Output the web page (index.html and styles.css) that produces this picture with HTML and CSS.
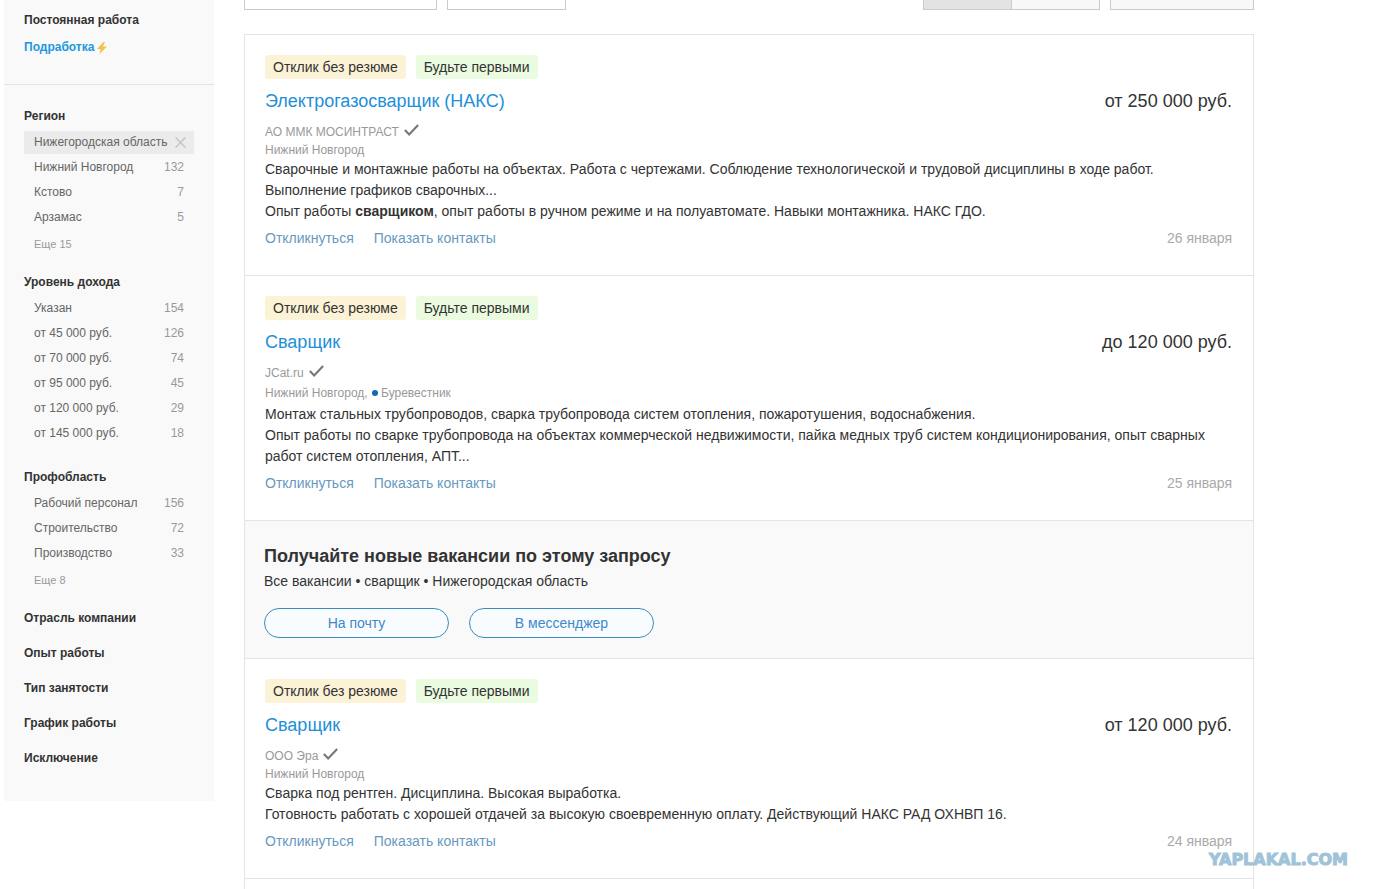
FILE: index.html
```html
<!DOCTYPE html>
<html lang="ru">

<head>
  <meta charset="UTF-8">
  <meta name="viewport" content="width=device-width, initial-scale=1.0">
  <title>Вакансии: сварщик</title>
  <link rel="stylesheet" href="styles.css">
</head>

<body>
  <div class="page">
    <aside class="sidebar">
      <nav class="work-type">
        <span class="work-type-current">Постоянная работа</span>
        <a href="#" class="work-type-link">Подработка
          <svg class="bolt" viewBox="0 0 10 12"><path d="M6.5 0 0 7h3.6L2.4 12 10 4.6H5.9L8 0z" fill="#f3c14b" /></svg>
        </a>
      </nav>
      <div class="filters">
        <section class="filter">
          <h3>Регион</h3>
          <ul>
            <li class="selected"><a href="#">Нижегородская область</a>
              <button class="remove" aria-label="Убрать">
                <svg viewBox="0 0 10 10"><path d="M0.5 0.5l9 9M9.5 0.5l-9 9" stroke="#c4c4c4" stroke-width="1.3" /></svg>
              </button>
            </li>
            <li><a href="#">Нижний Новгород</a><span>132</span></li>
            <li><a href="#">Кстово</a><span>7</span></li>
            <li><a href="#">Арзамас</a><span>5</span></li>
          </ul>
          <a href="#" class="more">Еще 15</a>
        </section>
        <section class="filter filter-full">
          <h3>Уровень дохода</h3>
          <ul>
            <li><a href="#">Указан</a><span>154</span></li>
            <li><a href="#">от 45 000 руб.</a><span>126</span></li>
            <li><a href="#">от 70 000 руб.</a><span>74</span></li>
            <li><a href="#">от 95 000 руб.</a><span>45</span></li>
            <li><a href="#">от 120 000 руб.</a><span>29</span></li>
            <li><a href="#">от 145 000 руб.</a><span>18</span></li>
          </ul>
        </section>
        <section class="filter">
          <h3>Профобласть</h3>
          <ul>
            <li><a href="#">Рабочий персонал</a><span>156</span></li>
            <li><a href="#">Строительство</a><span>72</span></li>
            <li><a href="#">Производство</a><span>33</span></li>
          </ul>
          <a href="#" class="more">Еще 8</a>
        </section>
        <div class="closed">
          <h3>Отрасль компании</h3>
          <h3>Опыт работы</h3>
          <h3>Тип занятости</h3>
          <h3>График работы</h3>
          <h3>Исключение</h3>
        </div>
      </div>
    </aside>

    <main class="content">
      <div class="toolbar">
        <button class="tool tool-sort"></button>
        <button class="tool tool-period"></button>
        <div class="switch">
          <button class="tool active"></button>
          <button class="tool"></button>
        </div>
        <button class="tool tool-map"></button>
      </div>

      <div class="list">
        <article class="card">
          <div class="tags">
            <span class="tag tag-yellow">Отклик без резюме</span>
            <span class="tag tag-green">Будьте первыми</span>
          </div>
          <div class="row title-row">
            <h2><a href="#">Электрогазосварщик (НАКС)</a></h2>
            <span class="salary">от 250 000 руб.</span>
          </div>
          <div class="company">АО ММК МОСИНТРАСТ
            <svg class="check" viewBox="0 0 14 11"><path d="M0.8 5.6l4 4L13.2 0.9" /></svg>
          </div>
          <div class="place">Нижний Новгород</div>
          <p>Сварочные и монтажные работы на объектах. Работа с чертежами. Соблюдение технологической и трудовой дисциплины в ходе работ. Выполнение графиков сварочных...</p>
          <p>Опыт работы <b>сварщиком</b>, опыт работы в ручном режиме и на полуавтомате. Навыки монтажника. НАКС ГДО.</p>
          <div class="row actions">
            <div class="links"><a href="#">Откликнуться</a><a href="#">Показать контакты</a></div>
            <span class="date">26 января</span>
          </div>
        </article>

        <article class="card">
          <div class="tags">
            <span class="tag tag-yellow">Отклик без резюме</span>
            <span class="tag tag-green">Будьте первыми</span>
          </div>
          <div class="row title-row">
            <h2><a href="#">Сварщик</a></h2>
            <span class="salary">до 120 000 руб.</span>
          </div>
          <div class="company">JCat.ru
            <svg class="check" viewBox="0 0 14 11"><path d="M0.8 5.6l4 4L13.2 0.9" /></svg>
          </div>
          <div class="place place-metro">Нижний Новгород, <i class="metro"></i>Буревестник</div>
          <p>Монтаж стальных трубопроводов, сварка трубопровода систем отопления, пожаротушения, водоснабжения.</p>
          <p>Опыт работы по сварке трубопровода на объектах коммерческой недвижимости, пайка медных труб систем кондиционирования, опыт сварных работ систем отопления, АПТ...</p>
          <div class="row actions">
            <div class="links"><a href="#">Откликнуться</a><a href="#">Показать контакты</a></div>
            <span class="date">25 января</span>
          </div>
        </article>

        <section class="subscribe">
          <h2>Получайте новые вакансии по этому запросу</h2>
          <p>Все вакансии • сварщик • Нижегородская область</p>
          <div class="subscribe-buttons">
            <button>На почту</button>
            <button>В мессенджер</button>
          </div>
        </section>

        <article class="card">
          <div class="tags">
            <span class="tag tag-yellow">Отклик без резюме</span>
            <span class="tag tag-green">Будьте первыми</span>
          </div>
          <div class="row title-row">
            <h2><a href="#">Сварщик</a></h2>
            <span class="salary">от 120 000 руб.</span>
          </div>
          <div class="company">ООО Эра
            <svg class="check" viewBox="0 0 14 11"><path d="M0.8 5.6l4 4L13.2 0.9" /></svg>
          </div>
          <div class="place">Нижний Новгород</div>
          <p>Сварка под рентген. Дисциплина. Высокая выработка.</p>
          <p>Готовность работать с хорошей отдачей за высокую своевременную оплату. Действующий НАКС РАД ОХНВП 16.</p>
          <div class="row actions">
            <div class="links"><a href="#">Откликнуться</a><a href="#">Показать контакты</a></div>
            <span class="date">24 января</span>
          </div>
        </article>
      </div>
    </main>
  </div>
  <div class="watermark">YAPLAKAL.COM</div>
</body>

</html>
```

FILE: styles.css
```css
* {
  margin: 0;
  padding: 0;
  box-sizing: border-box;
}

body {
  font-family: "Liberation Sans", Arial, sans-serif;
  font-size: 14px;
  line-height: 21px;
  color: #333;
  background-color: #fff;
}

a {
  color: inherit;
  text-decoration: none;
}

ul {
  list-style: none;
}

button {
  font-family: inherit;
  cursor: pointer;
}

.page {
  display: flex;
  align-items: flex-start;
  gap: 30px;
  min-height: 100vh;
  padding: 0 120px 0 4px;
}

/* sidebar */
.sidebar {
  flex: 0 0 210px;
  background-color: #f9f9f9;
  font-size: 12px;
}

.work-type {
  display: flex;
  flex-direction: column;
  padding: 7px 20px 23px;
  border-bottom: 1px solid #e4e4e4;
  font-weight: bold;
  line-height: 27px;
}

.work-type-link {
  display: flex;
  align-items: center;
  gap: 3px;
  color: #1b98e0;
}

.bolt {
  width: 10px;
  height: 12px;
}

.filters {
  padding: 19px 20px 31px;
}

.filters h3 {
  font-size: 12px;
  line-height: 24px;
}

.filter {
  margin-bottom: 14px;
}

.filter-full {
  margin-bottom: 20px;
}

.filter ul {
  display: flex;
  flex-direction: column;
  gap: 2px;
  margin-top: 3px;
}

.filter li {
  display: flex;
  justify-content: space-between;
  align-items: center;
  padding: 0 10px;
  line-height: 23px;
  color: #666;
  white-space: nowrap;
}

.filter li span {
  color: #999;
}

.filter .selected {
  padding-right: 8px;
  background-color: #ebebeb;
}

.remove {
  display: flex;
  border: none;
  background: none;
}

.remove svg {
  width: 11px;
  height: 11px;
}

.more {
  display: block;
  margin-top: 4px;
  padding: 0 10px;
  font-size: 11px;
  line-height: 23px;
  color: #999;
}

.closed {
  display: flex;
  flex-direction: column;
  gap: 11px;
}

/* results */
.content {
  flex: 1;
  min-width: 0;
  min-height: 100vh;
  display: flex;
  flex-direction: column;
}

.toolbar {
  display: flex;
  gap: 10px;
  margin-bottom: 24px;
}

.tool {
  height: 10px;
  border: 1px solid #c8cccf;
  border-top: none;
  background-color: #f8f8f8;
}

.tool-sort {
  width: 193px;
  background-color: #fff;
}

.tool-period {
  width: 119px;
  background-color: #fff;
}

.switch {
  display: flex;
  width: 177px;
  margin-left: auto;
}

.switch .tool {
  flex: 1;
  border-left: none;
}

.switch .active {
  border-left: 1px solid #c8cccf;
  background-color: #e3e3e3;
}

.tool-map {
  width: 144px;
}

.list {
  flex: 1;
  border: 1px solid #e4e4e4;
  border-bottom: none;
}

.card {
  padding: 20px 21px 27px 20px;
  border-bottom: 1px solid #e4e4e4;
}

.row {
  display: flex;
  justify-content: space-between;
}

.tags {
  display: flex;
  gap: 10px;
}

.tag {
  padding: 0 8px;
  border-radius: 3px;
  line-height: 24px;
}

.tag-yellow {
  background-color: #fcf2d6;
}

.tag-green {
  background-color: #eafbe0;
}

.title-row {
  margin: 10px 0;
  font-size: 18px;
  line-height: 24px;
}

.title-row h2 {
  font-size: 18px;
  font-weight: normal;
  color: #1e8fd8;
}

.company,
.place {
  font-size: 12px;
  line-height: 18px;
  color: #999;
}

.company {
  display: flex;
  gap: 5px;
}

.check {
  width: 15px;
  height: 12px;
  margin-top: 1px;
  fill: none;
  stroke: #777;
  stroke-width: 2;
}

.place-metro {
  line-height: 22px;
}

.metro {
  display: inline-block;
  width: 6px;
  height: 6px;
  margin: 0 3px 1px 1px;
  border-radius: 50%;
  background-color: #1269b0;
}

.actions {
  margin-top: 6px;
  line-height: 20px;
}

.links {
  display: flex;
  gap: 20px;
  color: #6699bf;
}

.date {
  color: #aaa;
}

.subscribe {
  padding: 20px 19px;
  border-bottom: 1px solid #e4e4e4;
  background-color: #f9f9f9;
}

.subscribe h2 {
  font-size: 18px;
  line-height: 30px;
}

.subscribe-buttons {
  display: flex;
  gap: 20px;
  margin-top: 16px;
}

.subscribe-buttons button {
  width: 185px;
  height: 30px;
  border: 1px solid #3a8dbd;
  border-radius: 15px;
  background-color: #f8fcff;
  font-size: 14px;
  color: #4088c8;
}

.watermark {
  position: absolute;
  right: 26px;
  bottom: 19px;
  font-family: "DejaVu Sans", sans-serif;
  font-size: 16px;
  font-weight: bold;
  line-height: 20px;
  color: #9fc3d9;
  -webkit-text-stroke: 1px #9fc3d9;
}
```
